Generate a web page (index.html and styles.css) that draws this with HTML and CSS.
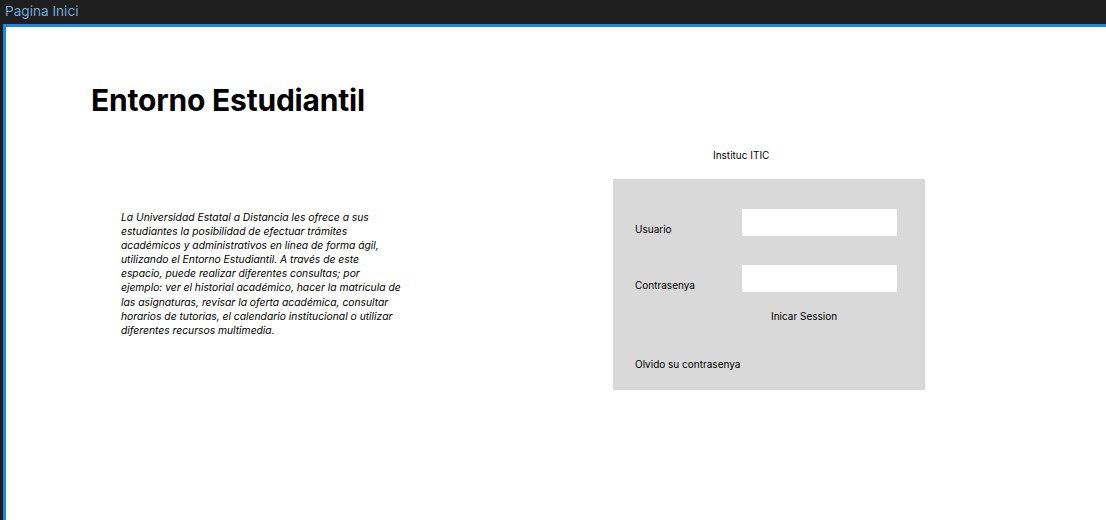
FILE: index.html
```html
<!DOCTYPE html>
<html lang="es">
<head>
<meta charset="utf-8">
<title>Pagina Inici</title>
<link rel="stylesheet" href="styles.css">
</head>
<body>
<div class="label">Pagina Inici</div>
<div class="frame">
  <h1 class="title">Entorno Estudiantil</h1>
  <div class="row">
    <p class="intro">La Universidad Estatal a Distancia les ofrece a sus<br>estudiantes la posibilidad de efectuar trámites<br>académicos y administrativos en línea de forma ágil,<br>utilizando el Entorno Estudiantil. A través de este<br>espacio, puede realizar diferentes consultas; por<br>ejemplo: ver el historial académico, hacer la matrícula de<br>las asignaturas, revisar la oferta académica, consultar<br>horarios de tutorías, el calendario institucional o utilizar<br>diferentes recursos multimedia.</p>
    <div class="login">
      <div class="inst">Instituc ITIC</div>
      <div class="box">
        <div class="field">
          <span class="flabel">Usuario</span>
          <span class="input"></span>
        </div>
        <div class="field second">
          <span class="flabel">Contrasenya</span>
          <span class="input"></span>
        </div>
        <div class="submit">Inicar Session</div>
        <div class="forgot">Olvido su contrasenya</div>
      </div>
    </div>
  </div>
</div>
</body>
</html>
```
FILE: styles.css
```css
html, body {
  margin: 0;
  padding: 0;
  height: 100%;
  overflow: hidden;
}
body {
  background: #1e1e1e;
  font-family: Inter, "Noto Sans", sans-serif;
}
.label {
  height: 24px;
  line-height: 22px;
  padding-left: 5px;
  font-size: 13.6px;
  color: #74a9d8;
}
.frame {
  margin-left: 3px;
  width: 1300px;
  height: 700px;
  background: #fff;
  border: 3px solid #1b87e2;
  box-sizing: border-box;
  padding-left: 85px;
  padding-top: 54px;
}
.title {
  margin: 0;
  font-size: 30px;
  line-height: 38px;
  font-weight: 700;
  color: #000;
  letter-spacing: -0.2px;
}
.row {
  display: flex;
  margin-top: 29px;
}
.intro {
  margin: 62px 0 0 30px;
  width: 282px;
  white-space: nowrap;
  font-size: 10.3px;
  line-height: 14.1px;
  font-style: italic;
  color: #000;
}
.login {
  margin-left: 210px;
  width: 312px;
}
.inst {
  font-size: 10px;
  line-height: 14px;
  padding-left: 100px;
  margin-bottom: 17px;
}
.box {
  background: #d9d9d9;
  height: 211px;
  box-sizing: border-box;
  padding: 30px 0 0 22px;
  font-size: 10px;
  line-height: 14px;
  color: #000;
}
.field {
  display: flex;
  align-items: flex-end;
}
.field.second {
  margin-top: 29px;
}
.flabel {
  width: 107px;
}
.input {
  width: 155px;
  height: 27px;
  background: #fff;
}
.submit {
  margin: 17px 0 0 136px;
}
.forgot {
  margin-top: 34px;
}
```
